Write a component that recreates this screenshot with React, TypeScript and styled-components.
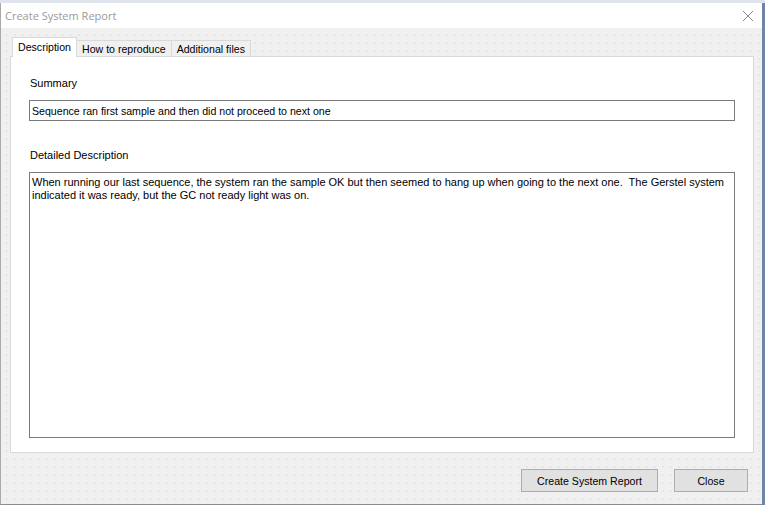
import React from 'react';
import styled, { createGlobalStyle } from 'styled-components';

const GlobalStyle = createGlobalStyle`
    html, body {
        margin: 0;
        padding: 0;
        width: 765px;
        height: 505px;
        overflow: hidden;
        background: #dfe4ec;
    }
    * { box-sizing: border-box; }
`;

const Desktop = styled.div`
    display: flex;
    width: 765px;
    height: 505px;
    padding-top: 3px;
`;

const RightEdge = styled.div`
    width: 3px;
    background: #6f84a6;
`;

const Window = styled.div`
    width: 762px;
    height: 502px;
    display: flex;
    flex-direction: column;
    border-left: 1px solid #a9a9a9;
    border-bottom: 1px solid #8c8c8c;
    font-family: "Liberation Sans", Arial, sans-serif;
    font-size: 11px;
    color: #000;
`;

const TitleBar = styled.div`
    height: 25px;
    background: #fff;
    display: flex;
    align-items: center;
    justify-content: space-between;
    padding: 0 8px 0 4px;
`;

const Title = styled.span`
    font-family: "Open Sans", "Liberation Sans", sans-serif;
    font-size: 11px;
    color: #9a9a9a;
`;

const CloseGlyph = styled.svg`
    width: 12px;
    height: 12px;
`;

const Body = styled.div`
    flex: 1;
    display: flex;
    flex-direction: column;
    padding: 9px 8px 0 9px;
    background-color: #f0f0f0;
    background-image: radial-gradient(circle, #dcdcdc 0.55px, transparent 0.85px);
    background-size: 8px 8px;
    background-position: 2px 3px;
`;

const TabStrip = styled.div`
    display: flex;
    align-items: flex-end;
    padding-left: 2px;
    height: 20px;
    margin-bottom: -1px;
    position: relative;
    z-index: 1;
`;

const Tab = styled.div<{ $active?: boolean }>`
    height: ${p => (p.$active ? '20px' : '17px')};
    padding: 0 5px;
    padding-bottom: ${p => (p.$active ? '2px' : '0')};
    display: flex;
    align-items: center;
    font-size: 10.6px;
    background: ${p => (p.$active ? '#fff' : '#f0f0f0')};
    border: 1px solid #d9d9d9;
    border-bottom: ${p => (p.$active ? 'none' : '1px solid #d9d9d9')};
    margin-left: ${p => (p.$active ? '0' : '-1px')};
    white-space: nowrap;
`;

const Panel = styled.div`
    width: 744px;
    height: 397px;
    background: #fff;
    border: 1px solid #d9d9d9;
    display: flex;
    flex-direction: column;
    padding: 20px 18px 14px 18px;
`;

const FieldLabel = styled.div<{ $gap?: number }>`
    line-height: 13px;
    padding-left: 1px;
    margin-top: ${p => p.$gap ?? 0}px;
    margin-bottom: 10px;
`;

const TextBox = styled.div`
    height: 21px;
    border: 1px solid #7a7a7a;
    padding: 0 2px;
    display: flex;
    align-items: center;
    white-space: nowrap;
    font-size: 10.6px;
`;

const TextArea = styled.div`
    flex: 1;
    border: 1px solid #7a7a7a;
    padding: 3px 2px;
    line-height: 13px;
    white-space: pre-wrap;
`;

const Footer = styled.div`
    display: flex;
    justify-content: flex-end;
    gap: 16px;
    padding: 16px 6px 0 0;
`;

const Button = styled.div<{ $w: number }>`
    width: ${p => p.$w}px;
    height: 23px;
    background: #e1e1e1;
    border: 1px solid #adadad;
    display: flex;
    align-items: center;
    justify-content: center;
    font-size: 10.6px;
`;

export default function App() {
    return (
        <>
            <GlobalStyle />
            <Desktop>
                <Window>
                    <TitleBar>
                        <Title>Create System Report</Title>
                        <CloseGlyph viewBox="0 0 12 12">
                            <path d="M1 1 L11 11 M11 1 L1 11" stroke="#8a8a8a" strokeWidth="1" fill="none" />
                        </CloseGlyph>
                    </TitleBar>
                    <Body>
                        <TabStrip>
                            <Tab $active>Description</Tab>
                            <Tab>How to reproduce</Tab>
                            <Tab>Additional files</Tab>
                        </TabStrip>
                        <Panel>
                            <FieldLabel>Summary</FieldLabel>
                            <TextBox>Sequence ran first sample and then did not proceed to next one</TextBox>
                            <FieldLabel $gap={28}>Detailed Description</FieldLabel>
                            <TextArea>
                                {'When running our last sequence, the system ran the sample OK but then seemed to hang up when going to the next one.  The Gerstel system indicated it was ready, but the GC not ready light was on.'}
                            </TextArea>
                        </Panel>
                        <Footer>
                            <Button $w={137}>Create System Report</Button>
                            <Button $w={74}>Close</Button>
                        </Footer>
                    </Body>
                </Window>
                <RightEdge />
            </Desktop>
        </>
    );
}
